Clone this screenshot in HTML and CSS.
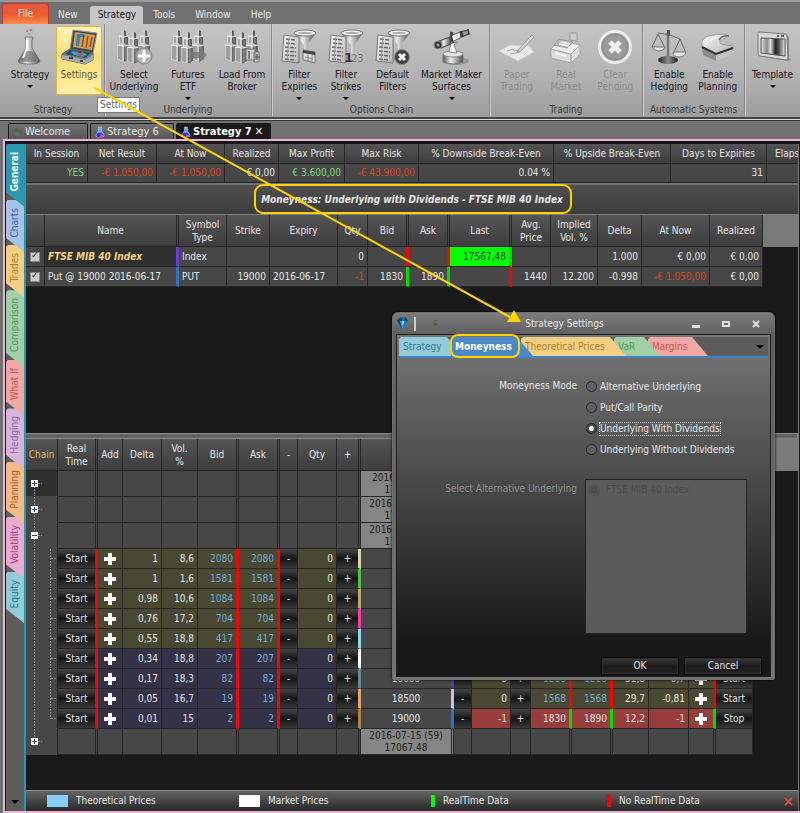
FILE: index.html
```html
<!DOCTYPE html>
<html lang="en">
<head>
<meta charset="utf-8">
<title>Strategy 7</title>
<link rel="stylesheet" href="styles.css">
</head>
<body>
<svg class="defs" aria-hidden="true">
  <defs>
    <linearGradient id="metal" x1="0" x2="1"><stop offset="0" stop-color="#5c5c5c"/><stop offset=".4" stop-color="#ececec"/><stop offset="1" stop-color="#4c4c4c"/></linearGradient>
    <linearGradient id="sheet" x1="0" x2="1" y1="0" y2="1"><stop offset="0" stop-color="#f6f6f6"/><stop offset="1" stop-color="#b4b4b4"/></linearGradient>
    <linearGradient id="dark" x1="0" x2="1"><stop offset="0" stop-color="#1c1c1c"/><stop offset=".5" stop-color="#8c8c8c"/><stop offset="1" stop-color="#222"/></linearGradient>
    <linearGradient id="stripes" x1="0" x2="1"><stop offset="0" stop-color="#e0e0e0"/><stop offset=".25" stop-color="#8a8a8a"/><stop offset=".4" stop-color="#ddd"/><stop offset=".6" stop-color="#222"/><stop offset=".75" stop-color="#555"/><stop offset="1" stop-color="#eee"/></linearGradient>
    <g id="tower">
      <path d="M4 2l2-2 3 1v6H4z" fill="#c8c8c8"/><path d="M7 1l2 1v6H7z" fill="#5c5c5c"/>
      <path d="M2 7l5-1 3 2v8H2z" fill="#d4d4d4"/><path d="M7 6l4 2v9H7z" fill="#585858"/>
      <path d="M0 16l6-2 6 2v14l-5 3-7-3z" fill="#cacaca"/><path d="M7 16l5-1v15l-5 3z" fill="#666"/>
      <path d="M2 17v13M4 17v14M4 8v6" stroke="#777" stroke-width="1"/><path d="M9 16v15M9 9v5" stroke="#999" stroke-width="1"/>
      <path d="M0 16l7 1 5-1M2 7l5 1 4-1" stroke="#f6f6f6" stroke-width="1" fill="none"/>
    </g>
    <g id="towers"><use href="#tower" transform="translate(22 0)"/><use href="#tower" transform="translate(1 0)"/><use href="#tower" transform="translate(11 2)"/></g>
    <g id="funnel"><path d="M13 4l10 12v10l4-2v-9l8-11z" fill="url(#metal)"/><ellipse cx="24" cy="4" rx="11" ry="3" fill="#eee" stroke="#777"/><ellipse cx="24" cy="4" rx="7" ry="1" fill="#aaa"/></g>
    <g id="list"><path d="M3 6l15 2v26L1 32z" fill="url(#sheet)" stroke="#777"/><path d="M5 10l10 1M5 14l10 1M4 18l11 1M4 22l11 1M4 26l11 1M4 30l10 1" stroke="#666" stroke-width="1.500" stroke-dasharray="4 1"/><path d="M8 8L6 32" stroke="#999"/></g>
    <g id="flask-small"><path d="M4 1h3v4l3 5q0 2-2 2H3q-2 0-2-2l3-5z" fill="#5aa8f0" stroke="#dce8ff" stroke-width=".6"/><path d="M2 8l4-1 3 2q1 3-2 3H3q-2 0-1-4z" fill="#3030e0"/><path d="M6 9l3 1-1 2H5z" fill="#e040d0"/></g>
  </defs>
</svg>

<div class="app">
  <nav class="menu" aria-label="Ribbon tabs">
    <button class="menu-file">File</button>
    <button class="menu-tab tab-new">New</button>
    <button class="menu-tab is-active">Strategy</button>
    <button class="menu-tab">Tools</button>
    <button class="menu-tab">Window</button>
    <button class="menu-tab">Help</button>
  </nav>

  <div class="ribbon">
    <section class="group g-strategy">
      <div class="tools">
        <button class="tool"><svg class="icon" viewBox="0 0 36 36"><circle cx="15" cy="2" r="1" fill="#777"/><circle cx="19" cy="1" r="1.300" fill="#888"/><circle cx="17" cy="5" r="1" fill="#999"/><path d="M13 8h8v2l-1 1v8l8 13q0 3-11 3t-11-3l8-13v-8l-1-1z" fill="url(#metal)" stroke="#666" stroke-width=".8"/><path d="M11 23q6-2 12 0l4 8q-10 4-20 0z" fill="#777" opacity=".75"/><path d="M15 11v8l-4 10" stroke="#fff" stroke-width="2" fill="none"/></svg><span>Strategy</span><i class="caret"></i></button>
        <button class="tool is-hot"><svg class="icon" viewBox="0 0 36 36"><path d="M12 1l24 3-4 20-23-4z" fill="#424b52" stroke="#8e989e"/><path d="M14 3l20 3-3 15-19-3z" fill="#d79a48"/><path d="M16 5h7v3h-4l-1 9h-3z" fill="#2585c8"/><path d="M23 6l-2 12M27 7l-2 12M31 8l-2 10" stroke="#8e4a20" stroke-width="1.400"/><path d="M9 20l23 4v7l-8 4-23-5v-5z" fill="#777e83" stroke="#555"/><path d="M9 21l21 3-6 5-20-4z" fill="#2c4858"/><path d="M9 23l4-1 4 2 7 0 2 2-4 2-9-2z" fill="#2aa0dc"/><path d="M15 22l4 4M22 23l-3 4" stroke="#e05020" stroke-width="1.500"/><path d="M1 26l23 5 8-5v5l-8 4-23-5z" fill="#a4abb0"/><path d="M8 29h4M19 32h3" stroke="#444" stroke-width="2"/></svg><span>Settings</span></button>
      </div>
      <h2>Strategy</h2>
    </section>
    <section class="group g-underlying">
      <div class="tools">
        <button class="tool"><svg class="icon" viewBox="0 0 36 36"><use href="#towers"/><circle cx="28" cy="27" r="8" fill="#b4b4b4" fill-opacity=".9" stroke="#888"/><path d="M28 21v12M22 27h12" stroke="#fff" stroke-width="3"/></svg><span>Select<br>Underlying</span></button>
        <button class="tool"><svg class="icon" viewBox="0 0 36 36"><use href="#towers"/><path d="M21 23h8v-5l8 8-8 8v-5h-8z" fill="#777" opacity=".8"/></svg><span>Futures<br>ETF</span><i class="caret"></i></button>
        <button class="tool"><svg class="icon" viewBox="0 0 36 36"><use href="#towers"/><path d="M22 20h9v11h-9zM30 23h5v10h-5z" fill="#ccc" stroke="#777"/><path d="M25 22v8M31 28h5M33 25v6" stroke="#666" stroke-width="1.500"/></svg><span>Load From<br>Broker</span></button>
      </div>
      <h2>Underlying</h2>
    </section>
    <section class="group g-options">
      <div class="tools">
        <button class="tool"><svg class="icon" viewBox="0 0 36 36"><use href="#funnel"/><use href="#list"/><path d="M22 21l12 2v11l-12-3z" fill="#ddd" stroke="#777"/><path d="M22 21l12 2v3l-12-2z" fill="#444"/><path d="M24 28l8 2M24 31l8 2M27 25v7M31 26v8" stroke="#888"/></svg><span>Filter<br>Expiries</span><i class="caret"></i></button>
        <button class="tool"><svg class="icon" viewBox="0 0 36 36"><use href="#funnel"/><use href="#list"/><text class="digit-one" x="16" y="33">1</text><text class="digits" x="23" y="33">23</text></svg><span>Filter<br>Strikes</span><i class="caret"></i></button>
        <button class="tool"><svg class="icon" viewBox="0 0 36 36"><use href="#funnel"/><use href="#list"/><circle cx="27" cy="28" r="7.500" fill="#444" stroke="#888"/><path d="M24 25l6 6M30 25l-6 6" stroke="#fff" stroke-width="3"/></svg><span>Default<br>Filters</span></button>
        <button class="tool"><svg class="icon" viewBox="0 0 36 36"><ellipse cx="22" cy="32" rx="13" ry="4" fill="#777" opacity=".5"/><path d="M9 25q9-4 20 0v8q-9 4-20 0z" fill="url(#metal)" stroke="#777"/><ellipse cx="19" cy="25" rx="10" ry="3" fill="#e4e4e4" stroke="#888"/><path d="M17 14l-2 9 8 1-3-8 4-3z" fill="#f4f4f4" stroke="#888"/><path d="M5 12l11-4 1 7-10 4z" fill="url(#metal)" stroke="#444"/><path d="M16 7l10-4 2 5-10 5z" fill="#eee" stroke="#555"/><path d="M26 3l8-2 1 4-8 3z" fill="#999" stroke="#333"/><circle cx="4" cy="16" r="4" fill="#333" stroke="#888"/><circle cx="4" cy="16" r="1.500" fill="#aaa"/><path d="M34 0l1 6M17 6l2 8M27 2l2 6" stroke="#333" stroke-width="1.500"/><path d="M17 6l1-3" stroke="#444" stroke-width="3"/></svg><span>Market Maker<br>Surfaces</span><i class="caret"></i></button>
      </div>
      <h2>Options Chain</h2>
    </section>
    <section class="group g-trading">
      <div class="tools">
        <button class="tool" disabled><svg class="icon" viewBox="0 0 36 36"><path d="M0 22l11-6 19 1 5 6-16 9z" fill="#e9e9e9" stroke="#cfcfcf"/><path d="M8 22l6-2 1 2 5-1M11 25l10-2" stroke="#a4a4a4" fill="none"/><path d="M19 21L33 6l2 2-13 14-4 1z" fill="#d2d2d2" stroke="#9a9a9a"/></svg><span>Paper<br>Trading</span></button>
        <button class="tool" disabled><svg class="icon" viewBox="0 0 36 36"><path d="M3 20l20 5v9L3 29zM23 25l9-9v9l-9 9z" fill="#ddd" stroke="#a8a8a8"/><path d="M3 20l9-9 20 5-9 9z" fill="#eee" stroke="#a8a8a8"/><path d="M11 10l14 3-6 6-13-3z" fill="#b8b8b8" stroke="#9a9a9a"/><path d="M22 4h7v8l-7-1z" fill="#ccc" stroke="#999"/><path d="M11 15l10 2M13 13l9 2M7 24l11 3" stroke="#fff" stroke-width="1.400"/></svg><span>Real<br>Market</span></button>
        <button class="tool" disabled><svg class="icon" viewBox="0 0 36 36"><circle cx="18" cy="18" r="15.500" fill="#9b9b9b" stroke="#ececec" stroke-width="3"/><circle cx="18" cy="18" r="12.500" fill="none" stroke="#888"/><path d="M13 13l10 10M23 13L13 23" stroke="#f0f0f0" stroke-width="5"/></svg><span>Clear<br>Pending</span></button>
      </div>
      <h2>Trading</h2>
    </section>
    <section class="group g-auto">
      <div class="tools">
        <button class="tool"><svg class="icon" viewBox="0 0 36 36"><path d="M17 4v26" stroke="#777" stroke-width="2.500"/><path d="M16 1h3v6h-3z" fill="#555"/><path d="M7 4q10 0 22 6M7 5L1 18M7 5l7 14M29 10l-6 13M29 10l6 14" stroke="#666" fill="none"/><path d="M1 18h13q-1 4-6 4t-7-4zM22 23h13q-1 5-7 5t-6-5z" fill="#e4e4e4" stroke="#777"/><ellipse cx="17" cy="31" rx="10" ry="4" fill="url(#dark)"/></svg><span>Enable<br>Hedging</span></button>
        <button class="tool"><svg class="icon" viewBox="0 0 36 36"><path d="M2 12q3-5 12-6l10-1q5 1 2 4-9 3-5 6l12 2v3l-17 6-14-7z" fill="url(#sheet)" stroke="#888" stroke-width=".7"/><path d="M19 11q3-5 10-4" stroke="#666" stroke-width="1.500" fill="none"/><path d="M2 19l14 7v6L3 26z" fill="#8c8c8c"/><path d="M16 26l17-6v5l-17 7z" fill="#c4c4c4"/><path d="M2 18l14 7 17-6" stroke="#333" stroke-width="2" fill="none"/><path d="M5 15q9-7 14-6" stroke="#fff" fill="none"/></svg><span>Enable<br>Planning</span></button>
      </div>
      <h2>Automatic Systems</h2>
    </section>
    <section class="group g-template">
      <div class="tools">
        <button class="tool"><svg class="icon" viewBox="0 0 36 36"><path d="M5 4l26 2 3 2v21l2 2-4 1-26-5z" fill="#666" opacity=".6"/><path d="M3 4q0-1 2-1l25 2q2 0 2 2l1 23-2 1L5 27q-2 0-2-3z" fill="#d8d8d8" stroke="#777"/><path d="M6 9l24 1v17L6 24z" fill="url(#stripes)" stroke="#555"/><path d="M22 7h2M26 7h3" stroke="#555" stroke-width="2"/></svg><span>Template</span><i class="caret"></i></button>
      </div>
    </section>
  </div>

  <nav class="docs" aria-label="Open documents">
    <button class="doc d-welcome"><svg class="doc-icon" viewBox="0 0 11 13"><circle cx="4" cy="4" r="2.400" fill="#56604a"/><circle cx="8" cy="6" r="2.400" fill="#7a5548"/><circle cx="5" cy="9" r="2.400" fill="#487a78"/></svg>Welcome</button>
    <button class="doc d-six"><svg class="doc-icon" viewBox="0 0 11 13"><use href="#flask-small"/></svg>Strategy 6</button>
    <button class="doc d-seven is-active"><svg class="doc-icon" viewBox="0 0 11 13"><use href="#flask-small"/></svg>Strategy 7 <span class="doc-close">✕</span></button>
  </nav>

  <div class="work">
    <nav class="side" aria-label="Views">
      <button class="side-tab s-general"><span>General</span></button>
      <button class="side-tab s-charts"><span>Charts</span></button>
      <button class="side-tab s-trades"><span>Trades</span></button>
      <button class="side-tab s-comparison"><span>Comparison</span></button>
      <button class="side-tab s-whatif"><span>What If</span></button>
      <button class="side-tab s-hedging"><span>Hedging</span></button>
      <button class="side-tab s-planning"><span>Planning</span></button>
      <button class="side-tab s-volatility"><span>Volatility</span></button>
      <button class="side-tab s-equity"><span>Equity</span></button>
      <i class="caret side-more"></i>
    </nav>

    <main class="content">
      <div class="clip">
      <table class="grid summary">
        <colgroup><col class="w62"><col class="w69"><col class="w68"><col class="w54"><col class="w66"><col class="w74"><col class="w135"><col class="w117"><col class="w96"><col class="w69"></colgroup>
        <thead><tr><th>In Session</th><th>Net Result</th><th>At Now</th><th>Realized</th><th>Max Profit</th><th>Max Risk</th><th>% Downside Break-Even</th><th>% Upside Break-Even</th><th>Days to Expiries</th><th class="partial">Elaps</th></tr></thead>
        <tbody><tr><td class="up">YES</td><td class="down">-€ 1.050,00</td><td class="down">-€ 1.050,00</td><td>€ 0,00</td><td class="up">€ 3.600,00</td><td class="down">-€ 43.900,00</td><td>0.04 %</td><td></td><td>31</td><td></td></tr></tbody>
      </table>
      </div>

      <div class="banner"><strong>Moneyness: Underlying with Dividends - FTSE MIB 40 Index</strong></div>

      <div class="pane">
        <table class="grid positions">
          <colgroup><col class="w19"><col class="w134"><col class="w48"><col class="w43"><col class="w68"><col class="w30"><col class="w41"><col class="w41"><col class="w62"><col class="w39"><col class="w47"><col class="w44"><col class="w68"><col class="w53"></colgroup>
          <thead><tr><th></th><th class="bar">Name</th><th>Symbol<br>Type</th><th>Strike</th><th>Expiry</th><th>Qty</th><th class="bar">Bid</th><th class="bar">Ask</th><th class="bar">Last</th><th>Avg.<br>Price</th><th>Implied<br>Vol. %</th><th>Delta</th><th>At Now</th><th>Realized</th></tr></thead>
          <tbody>
            <tr><td class="tick"><input type="checkbox" checked aria-label="FTSE MIB 40 Index"></td><td class="bar b-violet name is-index">FTSE MIB 40 Index</td><td class="left">Index</td><td></td><td></td><td>0</td><td class="bar b-red"></td><td class="bar b-red"></td><td class="bar b-green last">17567,48</td><td></td><td></td><td>1.000</td><td>€ 0,00</td><td>€ 0,00</td></tr>
            <tr><td class="tick"><input type="checkbox" checked aria-label="Put @ 19000 2016-06-17"></td><td class="bar b-blue name">Put @ 19000 2016-06-17</td><td class="left">PUT</td><td>19000</td><td class="left">2016-06-17</td><td class="down">-1</td><td class="bar b-green">1830</td><td class="bar b-green">1890</td><td class="bar b-red"></td><td>1440</td><td>12.200</td><td>-0.998</td><td class="down">-€ 1.050,00</td><td>€ 0,00</td></tr>
          </tbody>
        </table>
      </div>

      <div class="splitter"></div>

      <div class="pane chain-pane">
        <table class="grid chain">
          <colgroup><col class="w32"><col class="w40"><col class="w25"><col class="w39"><col class="w36"><col class="w41"><col class="w41"><col class="w18"><col class="w39"><col class="w24"><col class="w93"><col class="w18"><col class="w39"><col class="w20"><col class="w41"><col class="w41"><col class="w36"><col class="w40"><col class="w27"><col class="w37"></colgroup>
          <thead><tr><th class="gold">Chain</th><th class="bar">Real<br>Time</th><th>Add</th><th>Delta</th><th>Vol.<br>%</th><th class="bar">Bid</th><th class="bar">Ask</th><th>-</th><th>Qty</th><th class="bar">+</th><th class="bar"></th><th colspan="9"></th></tr></thead>
          <tbody id="chain-rows"></tbody>
        </table>
      </div>

      <footer class="legend">
        <span class="key k-theory"><i></i>Theoretical Prices</span>
        <span class="key k-market"><i></i>Market Prices</span>
        <span class="key k-live"><i></i>RealTime Data</span>
        <span class="key k-none"><i></i>No RealTime Data</span>
        <button class="legend-close" aria-label="Close legend"><svg viewBox="0 0 10 10"><path d="M1 1l8 8M9 1L1 9" stroke="#e84a42" stroke-width="2"/></svg></button>
      </footer>
    </main>
  </div>

  <div class="tooltip" role="tooltip">Settings</div>

  <section class="dialog" role="dialog" aria-labelledby="dialog-title">
    <header class="dialog-bar">
      <svg class="gem" viewBox="0 0 12 14"><path d="M0 4l4-4h5l3 4-6 10z" fill="#1873b4"/><path d="M3 4h6L6 14z" fill="#3c9cd8"/><path d="M0 4l4-4 2 4zM9 0l3 4H7z" fill="#0c3c68"/><path d="M6 4l2 1-2 4z" fill="#d8f4ff"/><path d="M0 4l3 0 3 10z" fill="#0c4c80"/></svg>
      <i class="grip"></i>
      <svg class="quick" viewBox="0 0 6 8"><path d="M0 1h6M0 4h6l-3 3z" stroke="#66593c" fill="#66593c"/></svg>
      <h1 id="dialog-title">Strategy Settings</h1>
      <button class="win" aria-label="Minimize"><svg viewBox="0 0 10 10"><path d="M1 6h8v3H1z" fill="#e0e0e4"/></svg></button>
      <button class="win" aria-label="Maximize"><svg viewBox="0 0 10 10"><path d="M2 3h6v4H2z" fill="none" stroke="#e0e0e4" stroke-width="2"/></svg></button>
      <button class="win" aria-label="Close"><svg viewBox="0 0 10 10"><path d="M2 2l6 6M8 2L2 8" stroke="#e0e0e4" stroke-width="2"/></svg></button>
    </header>
    <div class="dialog-body">
      <nav class="tabs" aria-label="Settings pages">
        <button class="tab t-strategy">Strategy</button>
        <button class="tab t-moneyness">Moneyness</button>
        <button class="tab t-prices">Theoretical Prices</button>
        <button class="tab t-var">VaR</button>
        <button class="tab t-margins">Margins</button>
        <i class="caret tabs-more"></i>
      </nav>
      <form class="form">
        <fieldset class="modes" aria-labelledby="mode-label">
          <div class="form-label" id="mode-label">Moneyness Mode</div>
          <div class="mode-list">
            <label><input type="radio" name="mode"><span>Alternative Underlying</span></label>
            <label><input type="radio" name="mode"><span>Put/Call Parity</span></label>
            <label><input type="radio" name="mode" checked><span class="focused">Underlying With Dividends</span></label>
            <label><input type="radio" name="mode"><span>Underlying Without Dividends</span></label>
          </div>
        </fieldset>
        <fieldset class="alternatives" disabled aria-labelledby="alt-label">
          <div class="form-label" id="alt-label">Select Alternative Underlying</div>
          <div class="alt-box"><label><input type="radio" name="alternative" checked disabled><span>FTSE MIB 40 Index</span></label></div>
        </fieldset>
      </form>
      <div class="actions"><button>OK</button><button>Cancel</button></div>
    </div>
  </section>

  <svg class="callouts" width="800" height="400" viewBox="0 0 800 400" aria-hidden="true">
    <path d="M94 87.500L510 317" stroke="#ffd400" stroke-width="2"/>
    <path d="M521 322l-14 0 7-12z" fill="#ffd400"/>
    <rect x="255" y="185" width="316" height="28" rx="8" fill="none" stroke="#ffd400" stroke-width="2"/>
    <rect x="451" y="335" width="68" height="22" rx="7" fill="none" stroke="#ffd400" stroke-width="2"/>
  </svg>
</div>
<script src="app.js"></script>
</body>
</html>
```
FILE: styles.css
```css
* { box-sizing: border-box; }
body {
  margin: 0;
  background: #717171;
  color: #e6e6e6;
  font: 10px/12px "DejaVu Sans Condensed", "DejaVu Sans", sans-serif;
}
button { font: inherit; color: inherit; border: 0; padding: 0; margin: 0; background: none; }
h1, h2 { margin: 0; font: inherit; }
fieldset { border: 0; margin: 0; padding: 0; min-width: 0; }
svg { display: block; }
.defs { position: absolute; width: 0; height: 0; }
.app { position: relative; min-height: 100vh; display: flex; flex-direction: column; overflow: hidden; }
.caret { display: block; width: 0; height: 0; border: 3px solid transparent; border-top-color: #000; border-bottom: 0; }

/* Ribbon tabs */
.menu { display: flex; align-items: flex-end; height: 24px; padding-left: 2px; border-top: 2px solid #999; background: #717171; }
.menu-file { width: 47px; height: 21px; border: 1px solid #c33; border-bottom: 0; border-radius: 3px 3px 0 0; background: linear-gradient(#e25a3c, #ea5a30 50%, #ff8a48); }
.menu-tab { height: 18px; padding: 0 10px; }
.menu-tab.tab-new { margin-left: 1px; padding: 0 12px 0 8px; }
.menu-tab.is-active { padding: 0 7px 0 8px; border-radius: 3px 3px 0 0; background: #c6c6c6; color: #1a1420; }

/* Ribbon */
.ribbon { display: flex; height: 97px; padding-left: 2px; background: linear-gradient(#c4c4c4, #b4b4b4 50%, #9c9c9c); border-bottom: 1px solid #333; box-shadow: inset 0 -1px #ddd, inset 0 -3px #444; color: #1a1420; }
.group { display: flex; flex-direction: column; padding: 2px 2px 0; border-right: 1px solid #888; box-shadow: 1px 0 #ccc; height: 92px; }
.tools { display: flex; height: 69px; }
.group h2 { padding-top: 9px; text-align: center; color: #383838; }
.tool { display: flex; flex: 1 1 0; flex-direction: column; align-items: center; padding-top: 3px; }
.tool .icon { width: 36px; height: 36px; margin-bottom: 4px; overflow: visible; }
.tool .caret { margin-top: 4px; }
.tool:disabled { color: #8e8e8e; }
.tool.is-hot { flex: 0 0 46px; border: 1px solid #e2b838; border-radius: 2px; padding-top: 2px; background: linear-gradient(#fff3ba, #ffdf7a 45%, #fff0a8); color: #5c5140; }
.g-strategy { width: 103px; }
.g-underlying { width: 167px; }
.g-options { width: 218px; padding-left: 4px; }
.g-options .tool:last-child { flex: 0 0 71px; }
.g-trading { width: 153px; }
.g-auto { width: 102px; }
.g-template { flex: 1; border: 0; box-shadow: none; }
.digit-one { font: bold 13px "DejaVu Sans", sans-serif; fill: #333; }
.digits { font: 11px "DejaVu Sans Condensed", sans-serif; fill: #777; }

/* Document tabs */
.docs { display: flex; align-items: flex-end; gap: 2px; height: 18px; padding-left: 8px; }
.doc { display: flex; align-items: center; gap: 2px; height: 16px; padding-left: 4px; border: 1px solid #1c1c1c; border-bottom: 0; border-radius: 2px 2px 0 0; background: linear-gradient(#727272, #585858); font-size: 11px; }
.doc-icon { width: 10px; height: 12px; }
.d-welcome { width: 80px; }
.d-six { width: 84px; }
.doc.is-active { width: 95px; background: #1a1a1a; font-weight: bold; color: #fff; }
.doc-close { padding-left: 1px; }

/* Workspace */
.work { display: flex; flex: 1; margin-left: 3px; border: 2px solid #e8b4d8; border-right: 0; background: #171717; padding: 3px 1px 0; }
.side { display: flex; flex-direction: column; width: 20px; border-right: 2px solid #2b98b2; background: #5c5c5c; }
.side-tab { position: relative; margin-bottom: -7px; padding: 8px 0 15px; clip-path: polygon(0 2px, 2px 0, 100% 0, 100% 100%, 0 calc(100% - 14px)); }
.side-tab span { display: block; margin: 0 auto; writing-mode: vertical-rl; transform: rotate(180deg); }
.s-general { z-index: 9; background: #2b98b2; color: #fff; font-weight: bold; }
.s-charts { z-index: 8; background: #a5c3e4; color: #3b65a4; }
.s-trades { z-index: 7; background: #f3cf84; color: #b77d28; }
.s-comparison { z-index: 6; background: #a0cfa8; color: #4f9b61; }
.s-whatif { z-index: 5; background: #efa8a4; color: #c85656; }
.s-hedging { z-index: 4; background: #d5b5da; color: #9a6aa8; }
.s-planning { z-index: 3; background: #f2bb8a; color: #b55d20; }
.s-volatility { z-index: 2; background: #e8aed0; color: #a83c80; }
.s-equity { z-index: 1; background: #94cbd8; color: #2c7c92; }
.side-more { margin: auto auto 7px; border-width: 4px; border-bottom: 0; }
.content { display: flex; flex: 1; flex-direction: column; min-width: 0; border-right: 1px solid #777; background: #1a1a1a; }
.clip { overflow: hidden; }

/* Grids */
.grid { border-collapse: separate; border-spacing: 0; table-layout: fixed; width: 0; }
.grid th, .grid td { padding: 0 3px; border: 0 solid #262626; border-width: 0 1px 1px 0; overflow: hidden; white-space: nowrap; }
.grid th { padding: 0; background: linear-gradient(#545454, #3e3e3e); font-weight: normal; text-align: center; line-height: 13px; }
.grid td { height: 20px; background: #474747; text-align: right; }
.grid .bar { border-right: 3px double #262626; }
.grid .b-red { border-right: 3px solid #f00; }
.grid .b-green { border-right: 3px solid #0d0; }
.grid .b-violet { border-right: 3px solid #6a3cd8; }
.grid .b-blue { border-right: 3px solid #2f72c4; }
.grid .left { text-align: left; }
.grid .up { color: #7fd67f; }
.grid .down { color: #d84820; }
.grid .gold { color: #d8bc60; }
.grid .partial { padding-left: 8px; text-align: left; }
.summary th { height: 20px; }
.summary td { height: 19px; }
.banner { height: 32px; padding-top: 9px; border-top: 2px solid #707070; border-bottom: 1px solid #808080; background: linear-gradient(#505050, #3c3c3c); text-align: center; font-style: italic; }
.pane { height: 218px; background: linear-gradient(#7a7a7a, #7a7a7a) 0 0 / 100% 32px no-repeat #1a1a1a; }
.positions th, .chain th { height: 32px; }
.grid .tick { padding: 0; text-align: center; }
.tick input { appearance: none; display: block; width: 10px; height: 10px; margin: 0 auto; border: 1px solid #888; background: #ccc; }
.tick input::after { content: "✓"; display: block; margin-top: -3px; color: #222; font-size: 9px; }
.grid .name { background: #474747; text-align: left; }
.grid .is-index { background: #303030; color: #f4d47c; font-weight: bold; font-style: italic; }
.grid .last { background: #0f0; color: #1c3c1c; }
.splitter { height: 6px; border: 1px solid #8c8c8c; border-left: 0; background: #626262; }
.chain-pane { flex: 1; height: auto; }
.chain tr.expiry td { height: 26px; }
.chain tr:first-child td:first-child { background: #303030; }
.grid td.tree { padding: 0; border-bottom-color: #474747; }
.grid td.date { background: #858585; color: #1c1c1c; text-align: center; padding: 0; }
.grid td.strike { text-align: center; }
.itm td.v, .grid td.puts { background: #494832; }
.otm td.v { background: #343247; }
.grid td.held { background: #983c3c; }
.grid td.est { color: #74aed4; }
.grid td.act { padding: 0; }
.act button { display: block; width: 100%; height: 19px; background: linear-gradient(#454545, #161616 50%, #383838); text-align: center; }
.act .add { background: none; }
.add svg { width: 12px; height: 12px; margin: 0 auto; }

/* Legend */
.legend { display: flex; align-items: center; height: 21px; padding-left: 21px; border-top: 1px solid #8c8c8c; background: linear-gradient(#646464, #262626); }
.key { display: flex; flex: none; align-items: center; gap: 8px; width: 192px; }
.key i { width: 21px; height: 12px; }
.k-live, .k-none { width: 176px; }
.k-none { flex-shrink: 1; }
.k-theory i { background: #86cdfb; }
.k-market i { background: #fff; }
.k-live i, .k-none i { width: 4px; }
.k-live i { background: #0f0; }
.k-none i { background: #f00; }
.legend-close { margin: 0 5px 0 auto; width: 9px; height: 9px; }

/* Floating items */
.tooltip { position: absolute; left: 97px; top: 97px; padding: 1px 2px; border: 1px solid #777; background: #fff; color: #666; }
.callouts { position: absolute; left: 0; top: 0; z-index: 30; pointer-events: none; }
.dialog { position: absolute; left: 392px; top: 312px; z-index: 20; width: 383px; padding: 0 3px 2px; border: 1px solid #707070; border-radius: 6px 6px 2px 2px; background: linear-gradient(#7c7c7c, #5e5e5e 22px, #747474); box-shadow: 0 0 3px #000; }
.dialog-bar { display: flex; align-items: center; height: 21px; padding-left: 1px; }
.gem { width: 11px; height: 13px; }
.grip { width: 2px; height: 14px; margin: 0 17px 0 6px; background: #ccc; }
.quick { width: 5px; height: 7px; }
.dialog-bar h1 { flex: 1; padding-left: 10px; text-align: center; }
.win { display: flex; justify-content: center; width: 30px; }
.win svg { width: 10px; height: 10px; }
.dialog-body { border: 1px solid #1e1e1e; padding: 2px 2px 0; background: linear-gradient(#767676, #181818 90%); }
.tabs { display: flex; align-items: flex-end; height: 21px; border-bottom: 2px solid #3f84c8; background: #5c5c5c; }
.tab { position: relative; height: 19px; margin-right: -12px; padding: 0 16px 0 4px; text-align: left; clip-path: polygon(0 2px, 2px 0, calc(100% - 16px) 0, 100% 100%, 0 100%); }
.t-strategy { z-index: 4; width: 64px; background: #94cbd8; color: #2c7c92; }
.t-moneyness { z-index: 5; width: 82px; background: #4b88c8; color: #fff; font-weight: bold; }
.t-prices { z-index: 3; width: 105px; background: #f3cf84; color: #b77d28; }
.t-var { z-index: 2; width: 46px; background: #a0cfa8; color: #4f9b61; }
.t-margins { z-index: 1; width: 60px; background: #efa8a4; color: #c85656; }
.tabs-more { margin: 0 4px 7px auto; border-width: 4px; border-bottom: 0; }
.form { padding: 18px 20px 18px 0; }
.modes, .alternatives { display: grid; grid-template-columns: 178px 1fr; column-gap: 8px; }
.form-label { padding-top: 4px; text-align: right; }
.mode-list { display: grid; grid-auto-rows: 21px; padding-left: 1px; }
.mode-list label, .alt-box label { display: flex; align-items: center; gap: 3px; }
.mode-list input, .alt-box input { appearance: none; flex: none; width: 11px; height: 11px; margin: 0; border: 1px solid #262626; border-radius: 50%; background: #606060; }
.mode-list input:checked { background: radial-gradient(#fff 0 2px, #4a4a4a 3px); }
.focused { outline: 1px dotted #ddd; }
.alternatives { margin-top: 19px; color: #909090; }
.alt-box { width: 162px; height: 155px; padding: 4px 3px; border: 1px solid #222; background: #5b5b5b; color: #4c4c4c; }
.alt-box input { border-color: #4e4e4e; background: radial-gradient(#4c4c4c 0 3px, #5b5b5b 4px); }
.alt-box span { padding-left: 3px; }
.actions { display: flex; justify-content: flex-end; gap: 5px; padding: 5px 6px 1px 0; }
.actions button { width: 78px; height: 18px; border: 1px solid #080808; background: linear-gradient(#3c3c3c, #1c1c1c 50%, #222); box-shadow: inset 0 0 0 1px #303030; }

/* Column widths */
.w18 { width: 18px; } .w19 { width: 19px; } .w20 { width: 20px; } .w24 { width: 24px; }
.w25 { width: 25px; } .w27 { width: 27px; } .w30 { width: 30px; } .w32 { width: 32px; }
.w36 { width: 36px; } .w37 { width: 37px; } .w39 { width: 39px; } .w40 { width: 40px; }
.w41 { width: 41px; } .w43 { width: 43px; } .w44 { width: 44px; } .w47 { width: 47px; }
.w48 { width: 48px; } .w53 { width: 53px; } .w54 { width: 54px; } .w62 { width: 62px; }
.w66 { width: 66px; } .w68 { width: 68px; } .w69 { width: 69px; } .w74 { width: 74px; }
.w93 { width: 93px; } .w96 { width: 96px; } .w117 { width: 117px; } .w134 { width: 134px; }
.w135 { width: 135px; }
```
FILE: app.js
```js
const strikes = [
  { d: '1', v: '8,6', p: 2080, c: '#d8d8a8' },
  { d: '1', v: '1,6', p: 1581, c: '#4fc04f' },
  { d: '0,98', v: '10,6', p: 1084, c: '#bca870' },
  { d: '0,76', v: '17,2', p: 704, c: '#ff3ca8' },
  { d: '0,55', v: '18,8', p: 417, c: '#86dcea' },
  { d: '0,34', v: '18,8', p: 207, c: '#ffffff' },
  { k: 18000, d: '0,17', v: '18,3', p: 82, c: '#66889a', put: ['1216', '1216', '31,8', '-0,7', '0'], pc: '#5c3c98' },
  { k: 18500, d: '0,05', v: '16,7', p: 19, c: '#e8a070', put: ['1568', '1568', '29,7', '-0,81', '0'], pc: '#d0b8f0' },
  { k: 19000, d: '0,01', v: '15', p: 2, c: '#b08448', put: ['1830', '1890', '12,2', '-1', '-1'], pc: '#2f72c4', held: true }
];

const plus = '<button class="add" aria-label="Add"><svg viewBox="0 0 12 12"><path d="M6 0v12M0 6h12" stroke="#fff" stroke-width="4"/></svg></button>';
const act = label => `<td class="act"><button>${label}</button></td>`;
const edge = color => ` style="border-right:3px solid ${color}"`;

function node(open, lineUp, lineDown) {
  return `<td class="tree"><svg width="31" height="25" viewBox="0 0 31 25">
    <path d="M8.500 ${lineUp ? 0 : 12}V${lineDown ? 25 : 12}M12 12.500h4" stroke="#888" stroke-dasharray="2 1"/>
    <path d="M5 9h7v7H5z" fill="#f0f4f4"/><path d="M6 12.500h5${open ? '' : 'M8.500 10v5'}" stroke="#34505c"/></svg></td>`;
}

function expiry(date, price, open, up, down) {
  return `<tr class="expiry">${node(open, up, down)}<td class="bar"></td><td></td><td></td><td></td><td class="bar"></td><td class="bar"></td><td></td><td></td><td class="bar"></td>
    <td class="date bar">${date}<br>${price}</td><td></td><td></td><td></td><td class="bar"></td><td class="bar"></td><td></td><td></td><td class="bar"></td><td></td></tr>`;
}

function putSide(s) {
  if (!s.put) return '<td colspan="10"></td>';
  const cell = s.held ? 'held' : 'puts';
  const side = s.held ? 'b-green' : 'b-red';
  const price = `${cell} ${side}${s.held ? '' : ' est'}`;
  return `<td class="strike"${edge(s.pc)}>${s.k}</td>${act('-')}<td class="${cell}">${s.put[4]}</td>${act('+')}
    <td class="${price}">${s.put[0]}</td><td class="${price}">${s.put[1]}</td>
    <td class="${cell}">${s.put[2]}</td><td class="${cell}">${s.put[3]}</td>
    <td class="act ${cell} ${side}">${plus}</td>${act(s.held ? 'Stop' : 'Start')}`;
}

function strikeRow(s, i) {
  const last = i === strikes.length - 1;
  return `<tr class="${i < 5 ? 'itm' : 'otm'}">
    <td class="tree"><svg width="31" height="19" viewBox="0 0 31 19"><path d="M8.500 0v19M24.500 0v${last ? 10 : 19}M25 9.500h6" stroke="#888" stroke-dasharray="2 1" fill="none"/></svg></td>
    <td class="act b-red"><button>Start</button></td><td class="act v">${plus}</td><td class="v">${s.d}</td><td class="v">${s.v}</td>
    <td class="v est b-red">${s.p}</td><td class="v est b-red">${s.p}</td>${act('-')}<td class="v">0</td>
    <td class="act"${edge(s.c)}><button>+</button></td>${putSide(s)}</tr>`;
}

document.getElementById('chain-rows').innerHTML =
  expiry('2016-05-20 (3)', '17567.48', false, false, true) +
  expiry('2016-05-27 (10)', '17567.48', false, true, true) +
  expiry('2016-06-17 (31)', '17067.48', true, true, true) +
  strikes.map(strikeRow).join('') +
  expiry('2016-07-15 (59)', '17067.48', false, true, false);
```
